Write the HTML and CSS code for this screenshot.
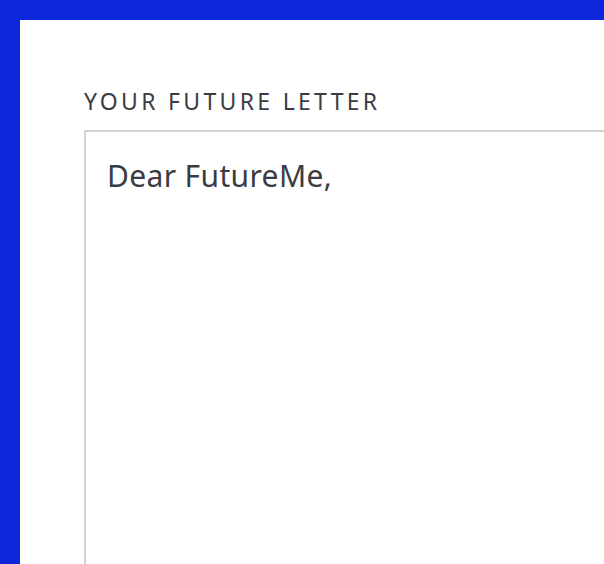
FILE: index.html
```html
<!DOCTYPE html>
<html lang="en">
<head>
<meta charset="utf-8">
<title>FutureMe</title>
<link rel="stylesheet" href="styles.css">
</head>
<body>
<main class="frame">
  <section class="card">
    <label class="label" for="letter">YOUR FUTURE LETTER</label>
    <div class="letter" id="letter">Dear FutureMe,</div>
  </section>
</main>
</body>
</html>
```
FILE: styles.css
```css
html, body {
  margin: 0;
  padding: 0;
}
body {
  background: #0b27d9;
  height: 564px;
  overflow: hidden;
  font-family: "Noto Sans", "Open Sans", sans-serif;
}
.frame {
  padding: 20px 0 0 20px;
  height: 564px;
  box-sizing: border-box;
  display: flex;
}
.card {
  flex: 1;
  background: #ffffff;
  overflow: hidden;
  padding: 66px 0 0 64px;
  box-sizing: border-box;
}
.label {
  display: block;
  font-size: 23px;
  line-height: 30px;
  letter-spacing: 3.3px;
  color: #3b3b44;
  margin-bottom: 14px;
}
.letter {
  border: 2px solid #d2d2d2;
  width: 700px;
  height: 600px;
  box-sizing: border-box;
  padding: 24px 0 0 21px;
  font-size: 30px;
  line-height: 40px;
  letter-spacing: 0.35px;
  color: #3b3b44;
}
```
